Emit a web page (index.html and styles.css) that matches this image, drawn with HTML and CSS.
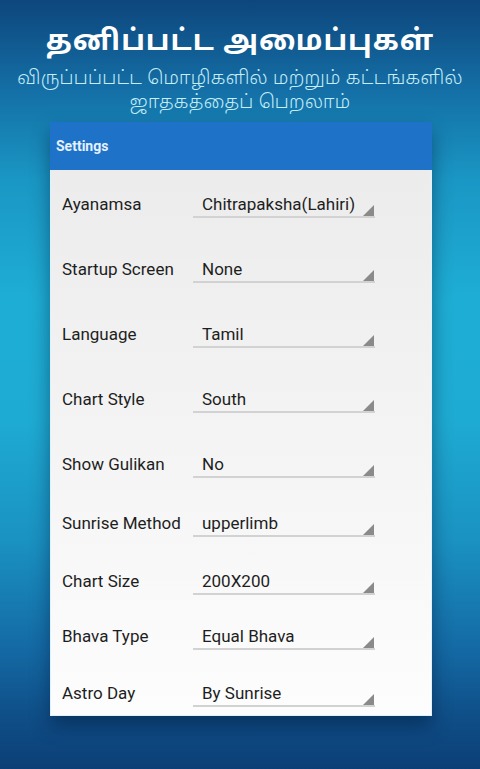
FILE: index.html
```html
<!DOCTYPE html>
<html lang="ta">
<head>
<meta charset="utf-8">
<link rel="stylesheet" href="styles.css">
</head>
<body>
<div class="screen">
  <header class="promo">
    <h1 class="promo-title">தனிப்பட்ட அமைப்புகள்</h1>
    <p class="promo-sub">விருப்பப்பட்ட மொழிகளில் மற்றும் கட்டங்களில்<br>ஜாதகத்தைப் பெறலாம்</p>
  </header>
  <section class="card">
    <div class="card-head">Settings</div>
    <div class="card-body">
      <div class="row p65"><span class="label">Ayanamsa</span><span class="spinner">Chitrapaksha(Lahiri)</span></div>
      <div class="row p65"><span class="label">Startup Screen</span><span class="spinner">None</span></div>
      <div class="row p65"><span class="label">Language</span><span class="spinner">Tamil</span></div>
      <div class="row p65"><span class="label">Chart Style</span><span class="spinner">South</span></div>
      <div class="row p59"><span class="label">Show Gulikan</span><span class="spinner">No</span></div>
      <div class="row p58"><span class="label">Sunrise Method</span><span class="spinner">upperlimb</span></div>
      <div class="row p55"><span class="label">Chart Size</span><span class="spinner">200X200</span></div>
      <div class="row p57"><span class="label">Bhava Type</span><span class="spinner">Equal Bhava</span></div>
      <div class="row p33"><span class="label">Astro Day</span><span class="spinner">By Sunrise</span></div>
    </div>
  </section>
</div>
</body>
</html>
```

FILE: styles.css
```css
html, body {
  margin: 0;
  padding: 0;
}
body {
  width: 480px;
  height: 769px;
  overflow: hidden;
  font-family: Roboto, "Noto Sans", sans-serif;
}
.screen {
  width: 480px;
  height: 769px;
  display: flex;
  flex-direction: column;
  align-items: center;
  background: linear-gradient(180deg,
    #0d467c 0px,
    #146fa6 90px,
    #1a97c4 180px,
    #1eaed5 300px,
    #1eabd3 420px,
    #1a92c2 540px,
    #1469a4 650px,
    #0f4d86 720px,
    #0c3f76 769px);
}
.promo {
  text-align: center;
  width: 100%;
}
.promo-title {
  margin: 23px 0 0;
  font-family: "Noto Sans Tamil", "Lohit Tamil", "Noto Sans", sans-serif;
  font-size: 28.5px;
  line-height: 40px;
  font-weight: bold;
  color: #ffffff;
  letter-spacing: 1px;
}
.promo-sub {
  margin: 5px 0 0;
  font-family: "Noto Sans Tamil", "Lohit Tamil", "Noto Sans", sans-serif;
  font-size: 18.5px;
  line-height: 24px;
  font-weight: 300;
  color: #c6eef9;
  letter-spacing: 0.3px;
}
.card {
  margin-top: 6px;
  width: 382px;
  margin-left: 2px;
  box-shadow: 0 10px 18px rgba(0, 20, 50, 0.45);
}
.card-head {
  height: 48px;
  box-sizing: border-box;
  padding-left: 6px;
  display: flex;
  align-items: center;
  background: #1e72c8;
  color: #e4f1ff;
  font-size: 14px;
  font-weight: bold;
}
.card-body {
  height: 546px;
  box-sizing: border-box;
  padding-top: 24px;
  background: linear-gradient(180deg, #ececec 0%, #f4f4f4 50%, #fdfdfd 100%);
  border: 1px solid #dff2fb;
  border-top: none;
}
.row {
  display: flex;
  align-items: flex-start;
  padding-left: 11px;
  box-sizing: border-box;
}
.p65 { height: 65px; }
.p59 { height: 59px; }
.p58 { height: 58px; }
.p57 { height: 57px; }
.p55 { height: 55px; }
.p33 { height: 32px; }
.label {
  width: 131px;
  font-size: 17px;
  line-height: 20px;
  color: #1e1e1e;
}
.spinner {
  position: relative;
  width: 182px;
  height: 24px;
  box-sizing: border-box;
  padding-left: 9px;
  font-size: 17px;
  line-height: 20px;
  color: #1e1e1e;
  border-bottom: 2px solid #d2d2d2;
}
.spinner::after {
  content: "";
  position: absolute;
  right: 1px;
  bottom: 0;
  width: 0;
  height: 0;
  border-style: solid;
  border-width: 0 0 11px 11px;
  border-color: transparent transparent #8a8a8a transparent;
}
```
